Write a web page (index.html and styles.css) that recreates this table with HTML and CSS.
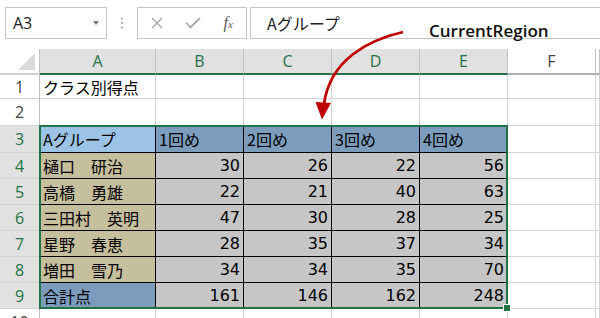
FILE: index.html
```html
<!DOCTYPE html>
<html lang="ja">
<head>
<meta charset="utf-8">
<title>CurrentRegion</title>
<link rel="stylesheet" href="styles.css">
</head>
<body>
<div class="fbar">
  <div class="namebox"><span>A3</span><span class="caret"></span></div>
  <div class="dots"><svg width="4" height="12" viewBox="0 0 4 12"><circle cx="2" cy="1.5" r="1" fill="#9a9a9a"/><circle cx="2" cy="6" r="1" fill="#9a9a9a"/><circle cx="2" cy="10.5" r="1" fill="#9a9a9a"/></svg></div>
  <div class="fbtns">
    <div class="fbtn"><svg width="12" height="12" viewBox="0 0 12 12"><path d="M1 1 L11 11 M11 1 L1 11" stroke="#a8a8a8" stroke-width="1.3" fill="none"/></svg></div>
    <div class="fbtn"><svg width="16" height="12" viewBox="0 0 16 12"><path d="M1 5.5 L5.5 10.5 L15 1" stroke="#a8a8a8" stroke-width="1.8" fill="none"/></svg></div>
    <div class="fbtn fx"><span class="fx-f">f</span><span class="fx-x">x</span></div>
  </div>
  <div class="finput">Aグループ</div>
</div>

<div class="sheet">
  <div class="c corner"><span class="tri"></span></div>
  <div class="c ch sel">A</div>
  <div class="c ch sel">B</div>
  <div class="c ch sel">C</div>
  <div class="c ch sel">D</div>
  <div class="c ch sel">E</div>
  <div class="c ch">F</div>
  <div class="c ch"></div>

  <div class="c rh">1</div>
  <div class="c t">クラス別得点</div>
  <div class="c"></div><div class="c"></div><div class="c"></div><div class="c"></div><div class="c"></div><div class="c"></div>

  <div class="c rh">2</div>
  <div class="c"></div><div class="c"></div><div class="c"></div><div class="c"></div><div class="c"></div><div class="c"></div><div class="c"></div>

  <div class="c rh sel">3</div>
  <div class="c d t blue">Aグループ</div>
  <div class="c d t steel">1回め</div>
  <div class="c d t steel">2回め</div>
  <div class="c d t steel">3回め</div>
  <div class="c d t steel">4回め</div>
  <div class="c"></div><div class="c"></div>

  <div class="c rh sel">4</div>
  <div class="c d t tan">樋口　研治</div>
  <div class="c d n gray">30</div>
  <div class="c d n gray">26</div>
  <div class="c d n gray">22</div>
  <div class="c d n gray">56</div>
  <div class="c"></div><div class="c"></div>

  <div class="c rh sel">5</div>
  <div class="c d t tan">高橋　勇雄</div>
  <div class="c d n gray">22</div>
  <div class="c d n gray">21</div>
  <div class="c d n gray">40</div>
  <div class="c d n gray">63</div>
  <div class="c"></div><div class="c"></div>

  <div class="c rh sel">6</div>
  <div class="c d t tan">三田村　英明</div>
  <div class="c d n gray">47</div>
  <div class="c d n gray">30</div>
  <div class="c d n gray">28</div>
  <div class="c d n gray">25</div>
  <div class="c"></div><div class="c"></div>

  <div class="c rh sel">7</div>
  <div class="c d t tan">星野　春恵</div>
  <div class="c d n gray">28</div>
  <div class="c d n gray">35</div>
  <div class="c d n gray">37</div>
  <div class="c d n gray">34</div>
  <div class="c"></div><div class="c"></div>

  <div class="c rh sel">8</div>
  <div class="c d t tan">増田　雪乃</div>
  <div class="c d n gray">34</div>
  <div class="c d n gray">34</div>
  <div class="c d n gray">35</div>
  <div class="c d n gray">70</div>
  <div class="c"></div><div class="c"></div>

  <div class="c rh sel">9</div>
  <div class="c d t steel">合計点</div>
  <div class="c d n gray">161</div>
  <div class="c d n gray">146</div>
  <div class="c d n gray">162</div>
  <div class="c d n gray">248</div>
  <div class="c"></div><div class="c"></div>

  <div class="c rh">10</div>
  <div class="c"></div><div class="c"></div><div class="c"></div><div class="c"></div><div class="c"></div><div class="c"></div><div class="c"></div>

  <div class="selection"></div>
  <div class="handle"></div>
</div>

<div class="label">CurrentRegion</div>
<svg class="arrow" width="600" height="318" viewBox="0 0 600 318">
  <path d="M403 32 C368 40 330 60 324 104" stroke="#c00000" stroke-width="2.8" fill="none"/>
  <polygon points="315.5,102 331,103 322,119.5" fill="#c00000"/>
</svg>
</body>
</html>
```

FILE: styles.css
```css
* { box-sizing: border-box; margin: 0; padding: 0; }
html, body { width: 600px; height: 318px; overflow: hidden; background: #fff; }
body { position: relative; font-family: "Open Sans", "Noto Sans", sans-serif; color: #000; }

.fbar { height: 49px; display: flex; align-items: flex-start; padding: 7px 0 0 5px; }
.namebox {
  width: 102px; height: 32px; border: 1px solid #c6c6c6;
  display: flex; align-items: center; justify-content: space-between;
  padding: 0 7px 0 7px; font-size: 16px; color: #222;
}
.caret { width: 0; height: 0; border-left: 3.5px solid transparent; border-right: 3.5px solid transparent; border-top: 4px solid #777; }
.dots { width: 30px; height: 32px; display: flex; align-items: center; justify-content: center; }
.fbtns { width: 110px; height: 32px; border: 1px solid #c6c6c6; display: flex; align-items: center; padding-left: 1px; }
.fbtn { width: 36px; height: 30px; display: flex; align-items: center; justify-content: center; }
.fx { font-family: "Liberation Serif", serif; font-style: italic; color: #555; align-items: baseline; padding-top: 6px; }
.fx-f { font-size: 16px; }
.fx-x { font-size: 11px; }
.finput {
  flex: 1; height: 32px; margin-left: 3px; border: 1px solid #c6c6c6; border-right: none;
  display: flex; align-items: center; padding-left: 16px;
  font-family: "Noto Sans CJK JP", sans-serif; font-size: 16px; color: #222;
}

.sheet {
  position: relative; display: grid;
  grid-template-columns: 40px 116px repeat(5, 88px) 1fr;
  grid-template-rows: 26px 24px 27px 27px repeat(6, 26px) 26px;
}
.c {
  border-right: 1px solid #d4d4d4; border-bottom: 1px solid #d4d4d4;
  display: flex; align-items: center; overflow: hidden; white-space: nowrap; font-size: 16px;
}
.corner { align-items: flex-end; justify-content: flex-end; padding: 0 4px 3px 0; border-right-color: #c0c0c0; border-bottom: 2px solid #d0d0d0; }
.tri { width: 17px; height: 17px; background: #dadada; clip-path: polygon(100% 0, 100% 100%, 0 100%); }
.ch {
  justify-content: center; font-size: 16px; color: #444;
  border-right-color: #c0c0c0; border-bottom: 2px solid #b0b0b0;
}
.ch.sel { background: #e1e1e1; color: #217346; border-bottom-color: #217346; }
.rh { justify-content: center; font-size: 16px; color: #444; border-right-color: #c0c0c0; }
.rh.sel { background: #e1e1e1; color: #217346; }

.t { font-family: "Noto Sans CJK JP", sans-serif; padding-left: 3px; }
.n { font-family: "DejaVu Sans", sans-serif; justify-content: flex-end; padding-right: 3px; }
.d { border-right-color: #000; border-bottom-color: #000; }
.blue { background: #9cc3e5; }
.steel { background: #7b9cbc; }
.tan { background: #c6bf9d; }
.gray { background: #c6c6c6; }

.selection { position: absolute; left: 39px; top: 76px; width: 469px; height: 184px; border: 2px solid #217346; pointer-events: none; }
.handle { position: absolute; left: 503px; top: 255px; width: 8px; height: 8px; background: #217346; border: 1px solid #fff; }

.label { position: absolute; left: 429px; top: 19px; font-size: 17px; line-height: 23px; font-weight: 600; color: #111; }
.arrow { position: absolute; left: 0; top: 0; pointer-events: none; }
```
